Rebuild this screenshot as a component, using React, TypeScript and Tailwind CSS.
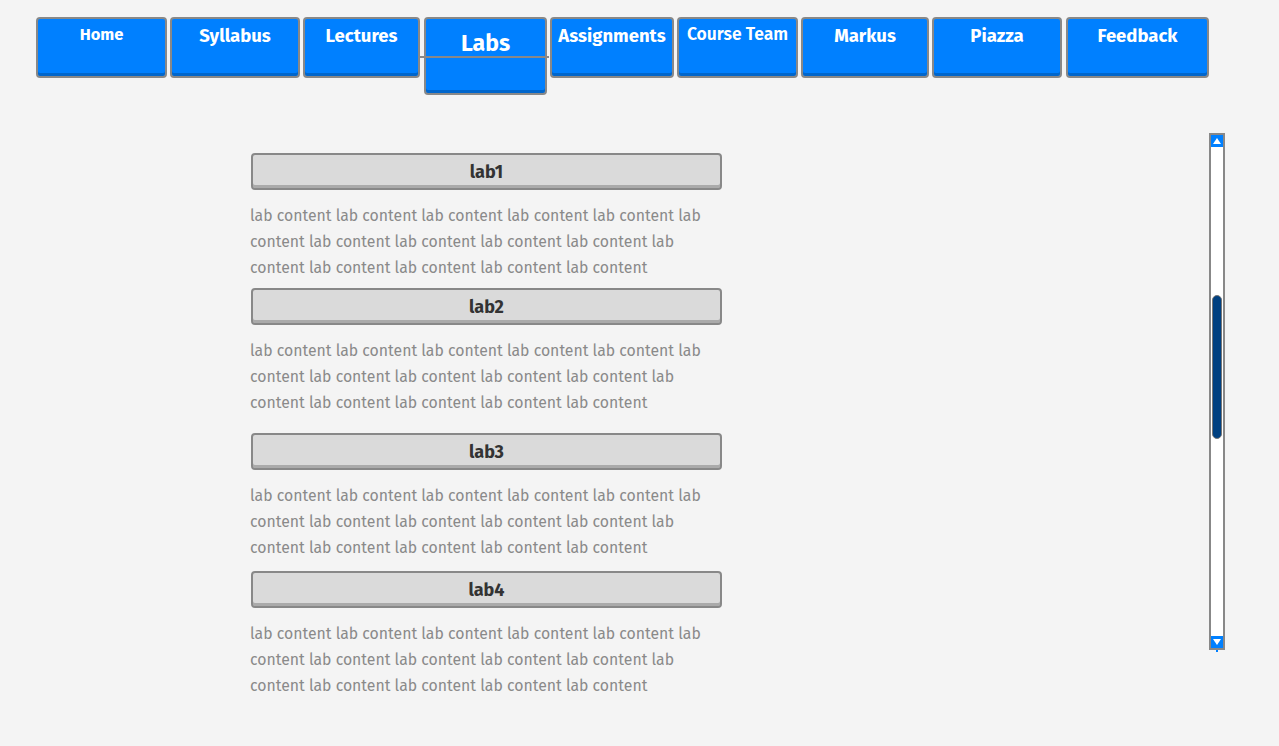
const TABS: { label: string; w: string; text: string }[] = [
  { label: "Home", w: "w-[131px]", text: "text-[16.5px] pt-[6px] font-bold" },
  { label: "Syllabus", w: "w-[130px]", text: "text-[18.5px] pt-[7px] font-bold" },
  { label: "Lectures", w: "w-[117px]", text: "text-[18.5px] pt-[7px] font-bold" },
  { label: "Labs", w: "w-[123px] ml-[1px]", text: "" },
  { label: "Assignments", w: "w-[124px]", text: "text-[18.5px] pt-[7px] font-bold" },
  { label: "Course Team", w: "w-[121px]", text: "text-[17.5px] pt-[6px] font-semibold" },
  { label: "Markus", w: "w-[128px]", text: "text-[18.5px] pt-[7px] font-bold" },
  { label: "Piazza", w: "w-[130px]", text: "text-[18.5px] pt-[7px] font-bold" },
  { label: "Feedback", w: "w-[143px] ml-[1px]", text: "text-[18.5px] pt-[7px] font-bold" },
];

const LABS = [
  { name: "lab1", mt: "mt-0" },
  { name: "lab2", mt: "mt-[7px]" },
  { name: "lab3", mt: "mt-[17px]" },
  { name: "lab4", mt: "mt-[10px]" },
];

const CONTENT = Array(15).fill("lab content").join(" ");

function Tab({ label, w, text }: { label: string; w: string; text: string }) {
  if (label === "Labs") {
    return (
      <div className={`${w} relative h-[78px] rounded-[4px] border-2 border-[#888] bg-[#0080ff] shadow-[inset_0_-3px_0_#0066cc]`}>
        <div className="pt-[11px] text-center text-[23px] font-bold leading-[26px] text-white">Labs</div>
        <div className="absolute left-[-6px] right-[-4px] top-[37px] h-[2px] bg-[#888]" />
      </div>
    );
  }
  return (
    <div className={`${w} h-[61px] rounded-[4px] border-2 border-[#888] bg-[#0080ff] shadow-[inset_0_-3px_0_#0066cc]`}>
      <div className={`${text} text-center leading-[20px] text-white`}>{label}</div>
    </div>
  );
}

export default function App() {
  return (
    <div
      className="min-h-[746px] bg-[#f4f4f4]"
      style={{ fontFamily: '"Fira Sans", Lato, "Liberation Sans", sans-serif' }}
    >
      {/* ── nav ── */}
      <nav className="flex items-start gap-[3px] pl-[36px] pt-[17px]">
        {TABS.map((t) => (
          <Tab key={t.label} {...t} />
        ))}
      </nav>

      {/* ── body ── */}
      <div className="flex items-start pt-[38px]">
        <div className="ml-[251px] w-[471px] pt-[20px]">
          {LABS.map((lab) => (
            <section key={lab.name} className={lab.mt}>
              <div className="h-[37px] rounded-[4px] border-2 border-[#888] bg-[#dadada] text-center text-[18px] font-bold leading-[34px] text-[#333] shadow-[inset_0_-3px_0_#aaa]">
                {lab.name}
              </div>
              <p className="ml-[-1px] mt-[13px] w-[465px] text-[15.8px] leading-[26px] text-[#8a8a8a]">
                {CONTENT}
              </p>
            </section>
          ))}
        </div>

        {/* ── scrollbar ── */}
        <div className="ml-[487px] flex flex-col items-center">
          <div className="flex h-[517px] w-[16px] flex-col border-2 border-[#888] bg-white">
            <div className="flex h-[12px] items-center justify-center bg-[#0080ff]">
              <svg width="8" height="6" viewBox="0 0 8 6"><path d="M4 0L8 6H0Z" fill="#fff" /></svg>
            </div>
            <div className="flex-1 px-[1px] pt-[148px]">
              <div className="h-[144px] rounded-full border border-[#777] bg-[#004080]" />
            </div>
            <div className="flex h-[12px] items-center justify-center bg-[#0080ff]">
              <svg width="8" height="6" viewBox="0 0 8 6"><path d="M0 0H8L4 6Z" fill="#fff" /></svg>
            </div>
          </div>
          <div className="h-[2px] w-[2px] bg-[#0080ff]" />
        </div>
      </div>
    </div>
  );
}
